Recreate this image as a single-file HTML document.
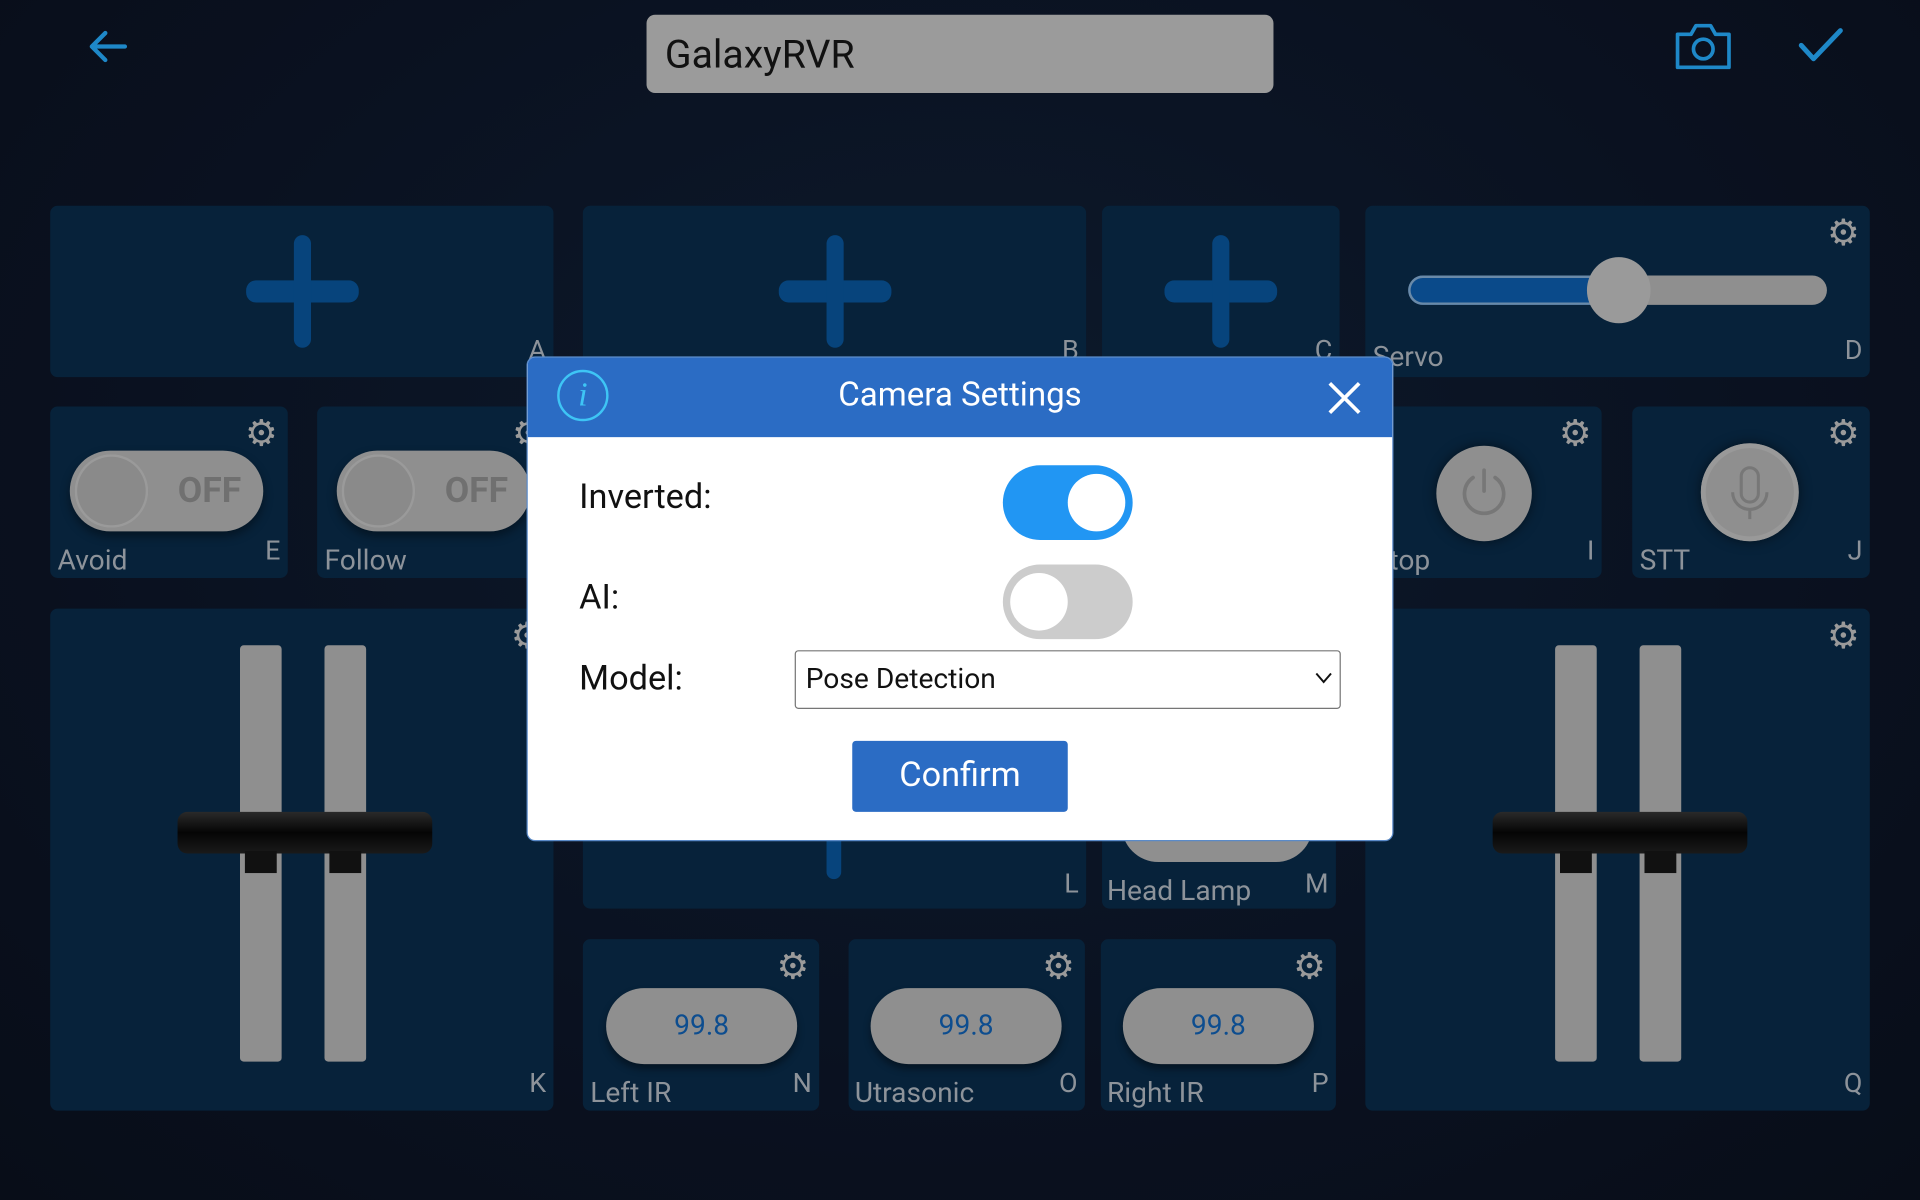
<!DOCTYPE html>
<html><head><meta charset="utf-8"><style>
html,body{margin:0;padding:0;width:1920px;height:1200px;overflow:hidden;background:#0a1120;}
#w{position:absolute;left:0;top:0;width:1568px;height:980px;transform:scale(1.22449);transform-origin:0 0;font-family:"Roboto","Liberation Sans",sans-serif;background:radial-gradient(ellipse at 50% 40%,#0d1a2c 0%,#0a1120 60%,#080d18 100%);}
.p{position:absolute;background:#07223a;border-radius:6px;}
.l{position:absolute;color:#8d939a;font-size:23px;}
.k{position:absolute;color:#8d939a;font-size:22px;right:6px;}
.g{position:absolute;color:#9a9a9a;font-size:30px;line-height:30px;}
.plus{position:absolute;}
.plus:before{content:"";position:absolute;left:-46px;top:-9px;width:92px;height:18px;background:#07447c;border-radius:8px;}
.plus:after{content:"";position:absolute;left:-7px;top:-46px;width:14px;height:92px;background:#07447c;border-radius:7px;}
.tog{position:absolute;width:158px;height:66px;border-radius:33px;background:#8f8f8f;box-shadow:0 4px 8px rgba(0,0,0,.4);}
.tog i{position:absolute;left:4px;top:3px;width:60px;height:60px;border-radius:50%;background:#8a8a8a;box-shadow:inset 0 0 0 2px #9a9a9a;}
.tog b{position:absolute;right:18px;top:16px;color:#707070;font-size:29px;font-weight:bold;}
.track{position:absolute;width:34px;height:340px;background:#8f8f8f;border-radius:3px;}
.hnd{position:absolute;width:208px;height:34px;background:linear-gradient(#2a2a2a,#050505 50%,#1a1a1a);border-radius:8px;}
.nub{position:absolute;width:26px;height:18px;background:#111;}
.pill{position:absolute;width:156px;height:62px;border-radius:31px;background:#8f8f8f;color:#0d4d8f;font-size:23px;text-align:center;line-height:62px;box-shadow:0 4px 6px rgba(0,0,0,.4);}
</style></head><body><div id="w">
<svg style="position:absolute;left:70px;top:22px" width="36" height="32" viewBox="0 0 36 32"><path d="M32 16H5M16 5L5 16l11 11" fill="none" stroke="#1e88c8" stroke-width="3.5" stroke-linecap="round" stroke-linejoin="round"/></svg>
<div style="position:absolute;left:528px;top:12px;width:512px;height:64px;background:#9b9b9b;border-radius:7px;"><span style="position:absolute;left:15px;top:13px;font-size:32px;color:#111;">GalaxyRVR</span></div>
<svg style="position:absolute;left:1366px;top:18px" width="50" height="40" viewBox="0 0 50 40"><path d="M4 10h11l4-7h12l4 7h11v27H4z" fill="none" stroke="#1e88c8" stroke-width="3" stroke-linejoin="round"/><circle cx="25" cy="22" r="8" fill="none" stroke="#1e88c8" stroke-width="3"/></svg>
<svg style="position:absolute;left:1468px;top:22px" width="38" height="30" viewBox="0 0 38 30"><path d="M3 15l10 11L35 3" fill="none" stroke="#1e88c8" stroke-width="4" stroke-linecap="round" stroke-linejoin="round"/></svg>

<div class="p" style="left:41px;top:168px;width:411px;height:140px"><div class="plus" style="left:206px;top:70px"></div><span class="k" style="top:106px">A</span></div>
<div class="p" style="left:476px;top:168px;width:411px;height:140px"><div class="plus" style="left:206px;top:70px"></div><span class="k" style="top:106px">B</span></div>
<div class="p" style="left:900px;top:168px;width:194px;height:140px"><div class="plus" style="left:97px;top:70px"></div><span class="k" style="top:106px">C</span></div>
<div class="p" style="left:1115px;top:168px;width:412px;height:140px">
<div style="position:absolute;left:35px;top:57px;width:342px;height:24px;border-radius:12px;background:#8f8f8f;"></div>
<div style="position:absolute;left:35px;top:57px;width:170px;height:24px;border-radius:12px 0 0 12px;background:#0a4a8a;box-shadow:inset 0 0 0 2px #6a8aa8;"></div>
<div style="position:absolute;left:181px;top:42px;width:52px;height:54px;border-radius:50%;background:#9a9a9a;"></div>
<span class="g" style="right:8px;top:8px">⚙</span><span class="l" style="left:6px;top:110px">Servo</span><span class="k" style="top:106px">D</span></div>

<div class="p" style="left:41px;top:332px;width:194px;height:140px"><div class="tog" style="left:16px;top:36px"><i></i><b>OFF</b></div><span class="g" style="right:8px;top:8px">⚙</span><span class="l" style="left:6px;top:112px">Avoid</span><span class="k" style="top:106px">E</span></div>
<div class="p" style="left:259px;top:332px;width:194px;height:140px"><div class="tog" style="left:16px;top:36px"><i></i><b>OFF</b></div><span class="g" style="right:8px;top:8px">⚙</span><span class="l" style="left:6px;top:112px">Follow</span></div>
<div class="p" style="left:1115px;top:332px;width:193px;height:140px"><div style="position:absolute;left:58px;top:32px;width:78px;height:78px;border-radius:50%;background:#8f8f8f;box-shadow:0 0 10px rgba(0,0,0,.5)"><svg width="78" height="78"><path d="M30 26a16 16 0 1 0 18 0M39 20v17" fill="none" stroke="#777" stroke-width="3" stroke-linecap="round"/></svg></div><span class="g" style="right:8px;top:8px">⚙</span><span class="l" style="left:6px;top:112px">Stop</span><span class="k" style="top:106px">I</span></div>
<div class="p" style="left:1333px;top:332px;width:194px;height:140px"><div style="position:absolute;left:56px;top:30px;width:80px;height:80px;border-radius:50%;background:#8f8f8f;box-shadow:inset 0 0 0 4px #999,0 0 10px rgba(0,0,0,.5)"><svg width="80" height="80"><rect x="33" y="20" width="14" height="28" rx="7" fill="none" stroke="#777" stroke-width="2.5"/><path d="M26 40a14 14 0 0 0 28 0M40 54v8" fill="none" stroke="#777" stroke-width="2.5"/></svg></div><span class="g" style="right:8px;top:8px">⚙</span><span class="l" style="left:6px;top:112px">STT</span><span class="k" style="top:106px">J</span></div>

<div class="p" style="left:41px;top:497px;width:411px;height:410px"><div class="track" style="left:155px;top:30px"></div><div class="track" style="left:224px;top:30px"></div><div class="hnd" style="left:104px;top:166px"></div><div class="nub" style="left:159px;top:198px"></div><div class="nub" style="left:228px;top:198px"></div><span class="g" style="right:8px;top:8px">⚙</span><span class="k" style="top:376px">K</span></div>
<div class="p" style="left:1115px;top:497px;width:412px;height:410px"><div class="track" style="left:155px;top:30px"></div><div class="track" style="left:224px;top:30px"></div><div class="hnd" style="left:104px;top:166px"></div><div class="nub" style="left:159px;top:198px"></div><div class="nub" style="left:228px;top:198px"></div><span class="g" style="right:8px;top:8px">⚙</span><span class="k" style="top:376px">Q</span></div>

<div class="p" style="left:476px;top:640px;width:411px;height:102px"><div style="position:absolute;left:199px;top:40px;width:12px;height:38px;background:#07447c;border-radius:6px"></div><span class="k" style="top:70px">L</span></div>
<div class="p" style="left:900px;top:640px;width:191px;height:102px"><div style="position:absolute;left:16px;top:20px;width:156px;height:44px;border-radius:0 0 30px 30px;background:#8f8f8f"></div><span class="l" style="left:4px;top:74px">Head Lamp</span><span class="k" style="top:70px">M</span></div>

<div class="p" style="left:476px;top:767px;width:193px;height:140px"><div class="pill" style="left:19px;top:40px">99.8</div><span class="g" style="right:8px;top:8px">⚙</span><span class="l" style="left:6px;top:112px">Left IR</span><span class="k" style="top:106px">N</span></div>
<div class="p" style="left:693px;top:767px;width:193px;height:140px"><div class="pill" style="left:18px;top:40px">99.8</div><span class="g" style="right:8px;top:8px">⚙</span><span class="l" style="left:5px;top:112px">Utrasonic</span><span class="k" style="top:106px">O</span></div>
<div class="p" style="left:899px;top:767px;width:192px;height:140px"><div class="pill" style="left:18px;top:40px">99.8</div><span class="g" style="right:8px;top:8px">⚙</span><span class="l" style="left:5px;top:112px">Right IR</span><span class="k" style="top:106px">P</span></div>

<div style="position:absolute;left:431px;top:292px;width:706px;height:394px;background:#fff;border-radius:6px;overflow:hidden;box-shadow:0 0 0 1px #5a8ac8;">
<div style="position:absolute;left:0;top:0;width:706px;height:65px;background:#2b6cc4;"></div>
<div style="position:absolute;left:24px;top:10px;width:38px;height:38px;border:2.5px solid #3ec5f5;border-radius:50%;color:#3ec5f5;font:italic 28px 'Liberation Serif',serif;text-align:center;line-height:38px;">i</div>
<div style="position:absolute;left:0;width:706px;top:14px;text-align:center;color:#fff;font-size:27px;">Camera Settings</div>
<svg style="position:absolute;left:652px;top:18px" width="30" height="30"><path d="M3 3l24 24M27 3L3 27" stroke="#fff" stroke-width="3"/></svg>
<span style="position:absolute;left:42px;top:97px;font-size:28px;color:#111;">Inverted:</span>
<div style="position:absolute;left:388px;top:88px;width:106px;height:61px;border-radius:31px;background:#2196f3"><div style="position:absolute;right:6px;top:7px;width:47px;height:47px;border-radius:50%;background:#fff"></div></div>
<span style="position:absolute;left:42px;top:179px;font-size:28px;color:#111;">AI:</span>
<div style="position:absolute;left:388px;top:169px;width:106px;height:61px;border-radius:31px;background:#ccc"><div style="position:absolute;left:6px;top:7px;width:47px;height:47px;border-radius:50%;background:#fff"></div></div>
<span style="position:absolute;left:42px;top:245px;font-size:28px;color:#111;">Model:</span>
<div style="position:absolute;left:218px;top:239px;width:444px;height:46px;border:1px solid #767676;border-radius:3px;"><span style="position:absolute;left:8px;top:9px;font-size:23px;color:#111">Pose Detection</span><svg style="position:absolute;right:6px;top:17px" width="14" height="10"><path d="M1 1l6 7 6-7" fill="none" stroke="#111" stroke-width="1.6"/></svg></div>
<div style="position:absolute;left:265px;top:313px;width:176px;height:58px;background:#2b6cc4;border-radius:3px;color:#fff;font-size:28px;text-align:center;line-height:56px;">Confirm</div>
</div>
</div></body></html>
